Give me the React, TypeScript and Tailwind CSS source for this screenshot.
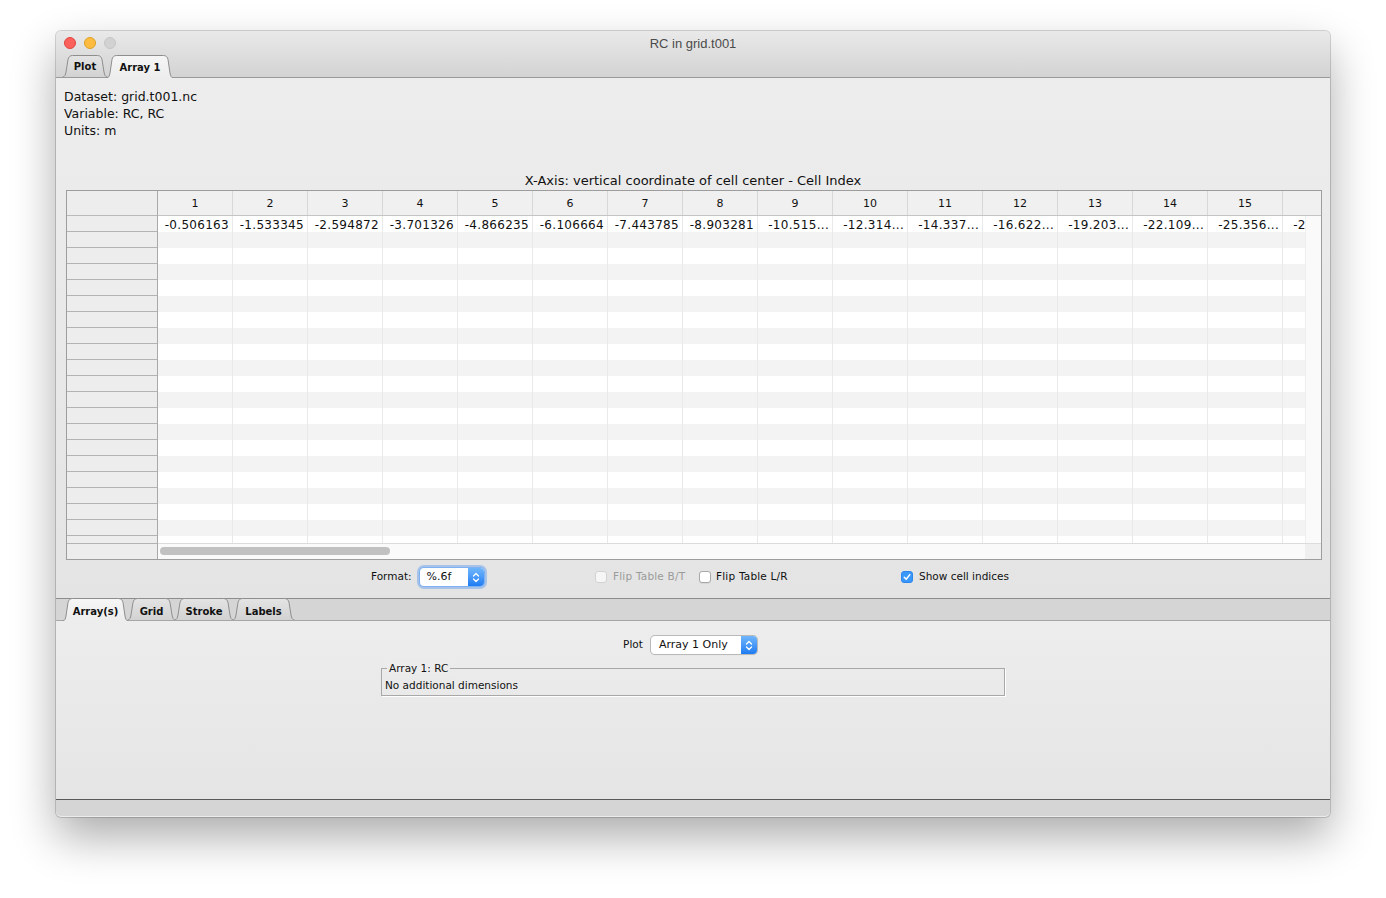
import React from 'react';

const values = [
  '-0.506163', '-1.533345', '-2.594872', '-3.701326', '-4.866235', '-6.106664',
  '-7.443785', '-8.903281', '-10.515...', '-12.314...', '-14.337...', '-16.622...',
  '-19.203...', '-22.109...', '-25.356...', '-28.974...',
];

const headerCols = Array.from({ length: 15 }, (_, i) => i + 1);
const dataRows = Array.from({ length: 21 }, (_, i) => i);

interface TabProps {
  label: string;
  w: number;
  widthClass: string;
  selected?: boolean;
  first?: boolean;
  low?: boolean;
}

function Tab({ label, w, widthClass, selected = false, first = false, low = false }: TabProps) {
  const h = selected ? 23 : 22;
  const id = `tab-${label.replace(/[^a-z0-9]/gi, '')}`;
  const outline = `M0.5 ${h} C2.5 ${h} 3.5 ${h - 2} 4 ${h - 5} L6 4.5 C6.6 2 8 0.5 10.5 0.5 L${w - 10.5} 0.5 C${w - 8} 0.5 ${w - 6.6} 2 ${w - 6} 4.5 L${w - 4} ${h - 5} C${w - 3.5} ${h - 2} ${w - 2.5} ${h} ${w - 0.5} ${h}`;

  return (
    <div
      className={`relative flex items-center justify-center ${widthClass} ${
        selected ? 'h-[23px] -mb-px z-10' : 'h-[22px] z-0'
      } ${first ? '' : '-ml-[2px]'}`}
    >
      <svg className="absolute left-0 top-0" width={w} height={h} viewBox={`0 0 ${w} ${h}`}>
        <defs>
          <linearGradient id={id} x1="0" y1="0" x2="0" y2="1">
            <stop offset="0" stopColor={selected ? '#f6f6f6' : '#e4e4e4'} />
            <stop offset="1" stopColor={selected ? '#ededed' : '#d2d2d2'} />
          </linearGradient>
        </defs>
        <path d={`${outline} Z`} fill={`url(#${id})`} stroke="none" />
        <path d={outline} fill="none" stroke="#8e8e8e" strokeWidth="1" />
      </svg>
      <span className={`relative text-[10px] font-bold text-[#111] ${low ? 'pt-[4px]' : 'pt-[1px]'}`}>{label}</span>
    </div>
  );
}

function Stepper() {
  return (
    <div className="flex w-[16px] items-center justify-center rounded-r-[4px] bg-gradient-to-b from-[#6fb6fb] to-[#1d7cf2]">
      <svg width="8" height="11" viewBox="0 0 8 11" fill="none" stroke="#fff" strokeWidth="1.3" strokeLinecap="round" strokeLinejoin="round">
        <path d="M1.5 4 L4 1.5 L6.5 4" />
        <path d="M1.5 7 L4 9.5 L6.5 7" />
      </svg>
    </div>
  );
}

function Checkbox({ checked = false, disabled = false }: { checked?: boolean; disabled?: boolean }) {
  if (checked) {
    return (
      <div className="flex h-[12px] w-[12px] items-center justify-center rounded-[3px] border border-[#2d86ec] bg-[#3b98fb]">
        <svg width="8" height="8" viewBox="0 0 8 8" fill="none" stroke="#fff" strokeWidth="1.5" strokeLinecap="round" strokeLinejoin="round">
          <path d="M1.3 4.2 L3.2 6.2 L6.8 1.6" />
        </svg>
      </div>
    );
  }
  return (
    <div
      className={`h-[12px] w-[12px] rounded-[3px] border ${
        disabled ? 'border-[#d2d2d2] bg-[#f6f6f6]' : 'border-[#a8a8a8] bg-white shadow-[0_1px_0_rgba(0,0,0,0.06)]'
      }`}
    />
  );
}

export default function App() {
  return (
    <div className="min-h-[898px] w-full bg-white pl-[56px] pt-[31px] font-['DejaVu_Sans',sans-serif] text-[#111]">
      <div className="flex h-[786px] w-[1274px] flex-col rounded-[5px] bg-[#ececec] shadow-[0_0_0_1px_rgba(0,0,0,0.16),0_20px_45px_rgba(0,0,0,0.33)]">
        {/* Title bar + tabs */}
        <div className="flex h-[47px] flex-col rounded-t-[5px] border-b border-[#9a9a9a] bg-gradient-to-b from-[#e9e9e9] to-[#d3d3d3]">
          <div className="grid h-[24px] grid-cols-[1fr_auto_1fr] items-center">
            <div className="flex items-center gap-[8px] pl-[8px]">
              <div className="h-[12px] w-[12px] rounded-full border border-[#e0443e] bg-[#fc605b]" />
              <div className="h-[12px] w-[12px] rounded-full border border-[#dea123] bg-[#fdbc40]" />
              <div className="h-[12px] w-[12px] rounded-full border border-[#c6c6c6] bg-[#d2d2d2]" />
            </div>
            <div className="pt-[1px] font-['Liberation_Sans',Arial,sans-serif] text-[13px] text-[#4b4b4b]">RC in grid.t001</div>
            <div />
          </div>
          <div className="flex h-[22px] items-end pl-[6px]">
            <Tab label="Plot" w={46} widthClass="w-[46px]" first />
            <Tab label="Array 1" w={68} widthClass="w-[68px]" selected />
          </div>
        </div>

        {/* Array panel */}
        <div className="flex h-[520px] flex-col bg-gradient-to-b from-[#ededed] to-[#e4e4e4]">
          <div className="pl-[8px] pt-[10px] text-[12.5px] leading-[17px]">
            <div>Dataset: grid.t001.nc</div>
            <div>Variable: RC, RC</div>
            <div>Units: m</div>
          </div>
          <div className="mt-[33px] h-[17px] text-center text-[13px] leading-[17px]">
            X-Axis: vertical coordinate of cell center - Cell Index
          </div>

          {/* Table */}
          <div className="ml-[10px] mt-[1px] flex h-[370px] w-[1256px] border border-[#9d9d9d] bg-white">
            {/* Row header */}
            <div className="flex w-[91px] shrink-0 flex-col border-r border-[#a9a9a9] bg-[#ededed]">
              <div className="h-[25px] shrink-0 border-b border-[#b9b9b9]" />
              <div className="flex h-[327px] shrink-0 flex-col overflow-hidden">
                {dataRows.map((r) => (
                  <div key={r} className="h-[16px] shrink-0 border-b border-[#b3b3b3]" />
                ))}
              </div>
              <div className="flex-1 border-t border-[#b3b3b3]" />
            </div>

            <div className="flex min-w-0 flex-1 flex-col">
              {/* Column header */}
              <div className="flex h-[25px] shrink-0 overflow-hidden border-b border-[#c4c4c4] bg-[#f0f0f0]">
                {headerCols.map((c) => (
                  <div
                    key={c}
                    className="flex w-[75px] shrink-0 items-center justify-center border-r border-[#d7d7d7] pt-[3px] text-[11px]"
                  >
                    {c}
                  </div>
                ))}
                <div className="flex-1" />
              </div>

              {/* Data viewport + vertical scrollbar */}
              <div className="flex h-[327px] shrink-0">
                <div className="flex min-w-0 flex-1 flex-col overflow-hidden">
                  {dataRows.map((r) => (
                    <div
                      key={r}
                      className={`flex h-[16px] shrink-0 ${r % 2 === 1 ? 'bg-[#f3f3f3]' : 'bg-white'}`}
                    >
                      {values.map((v, i) => (
                        <div
                          key={i}
                          className="flex w-[75px] shrink-0 items-center justify-end overflow-hidden whitespace-nowrap border-r border-[#e9e9e9] pr-[3px] pt-[1px] text-[12px] leading-[16px] tracking-[0.3px]"
                        >
                          {r === 0 ? v : ''}
                        </div>
                      ))}
                    </div>
                  ))}
                </div>
                <div className="w-[16px] shrink-0 border-l border-[#eeeeee] bg-[#fafafa]" />
              </div>

              {/* Horizontal scrollbar */}
              <div className="flex flex-1 border-t border-[#dcdcdc]">
                <div className="flex-1 bg-[#fafafa] pl-[2px] pt-[3px]">
                  <div className="h-[8px] w-[230px] rounded-full bg-[#c1c1c1]" />
                </div>
                <div className="w-[16px] bg-[#efefef]" />
              </div>
            </div>
          </div>

          {/* Format row */}
          <div className="flex h-[38px] items-start pl-[315px] pt-[8px] text-[10.5px]">
            <div className="flex w-[224px] items-center gap-[8px]">
              <span>Format:</span>
              <div className="flex h-[18px] w-[64px] rounded-[4px] bg-white shadow-[0_0_0_1px_#7fb0ef,0_0_0_3px_rgba(92,152,238,0.45)]">
                <div className="flex flex-1 items-center pl-[7px] text-[11px]">%.6f</div>
                <Stepper />
              </div>
            </div>
            <div className="flex h-[18px] w-[104px] items-center gap-[6px]">
              <Checkbox disabled />
              <span className="tracking-[0.2px] text-[#9b9b9b]">Flip Table B/T</span>
            </div>
            <div className="flex h-[18px] w-[202px] items-center gap-[5px]">
              <Checkbox />
              <span className="tracking-[0.2px]">Flip Table L/R</span>
            </div>
            <div className="flex h-[18px] items-center gap-[6px]">
              <Checkbox checked />
              <span>Show cell indices</span>
            </div>
          </div>
        </div>

        {/* Lower tabbed pane */}
        <div className="flex h-[23px] items-end border-t border-b border-t-[#8c8c8c] border-b-[#a6a6a6] bg-[#d5d5d5] pl-[6px]">
          <Tab label="Array(s)" w={67} widthClass="w-[67px]" selected first low />
          <Tab label="Grid" w={49} widthClass="w-[49px]" low />
          <Tab label="Stroke" w={60} widthClass="w-[60px]" low />
          <Tab label="Labels" w={63} widthClass="w-[63px]" low />
        </div>
        <div className="flex h-[178px] flex-col bg-gradient-to-b from-[#ededed] to-[#e5e5e5] text-[10.5px]">
          <div className="flex items-center justify-center gap-[8px] pr-[6px] pt-[15px]">
            <span>Plot</span>
            <div className="flex h-[18px] w-[106px] rounded-[4px] bg-white shadow-[0_0_0_1px_#b9b9b9,0_1px_1px_rgba(0,0,0,0.12)]">
              <div className="flex flex-1 items-center pl-[8px] text-[11px]">Array 1 Only</div>
              <Stepper />
            </div>
          </div>
          <div className="relative mx-auto mt-[14px] h-[28px] w-[624px] border border-[#a8a8a8] pl-[3px] pt-[10px] leading-[13px] shadow-[1px_1px_0_#ffffff]">
            <span className="absolute -top-[7px] left-[5px] bg-[#ececec] px-[2px] leading-[12px]">Array 1: RC</span>
            No additional dimensions
          </div>
        </div>

        {/* Bottom bar */}
        <div className="h-[17px] rounded-b-[5px] border-t border-[#5a5a5a] bg-[#d5d5d5]" />
      </div>
    </div>
  );
}
